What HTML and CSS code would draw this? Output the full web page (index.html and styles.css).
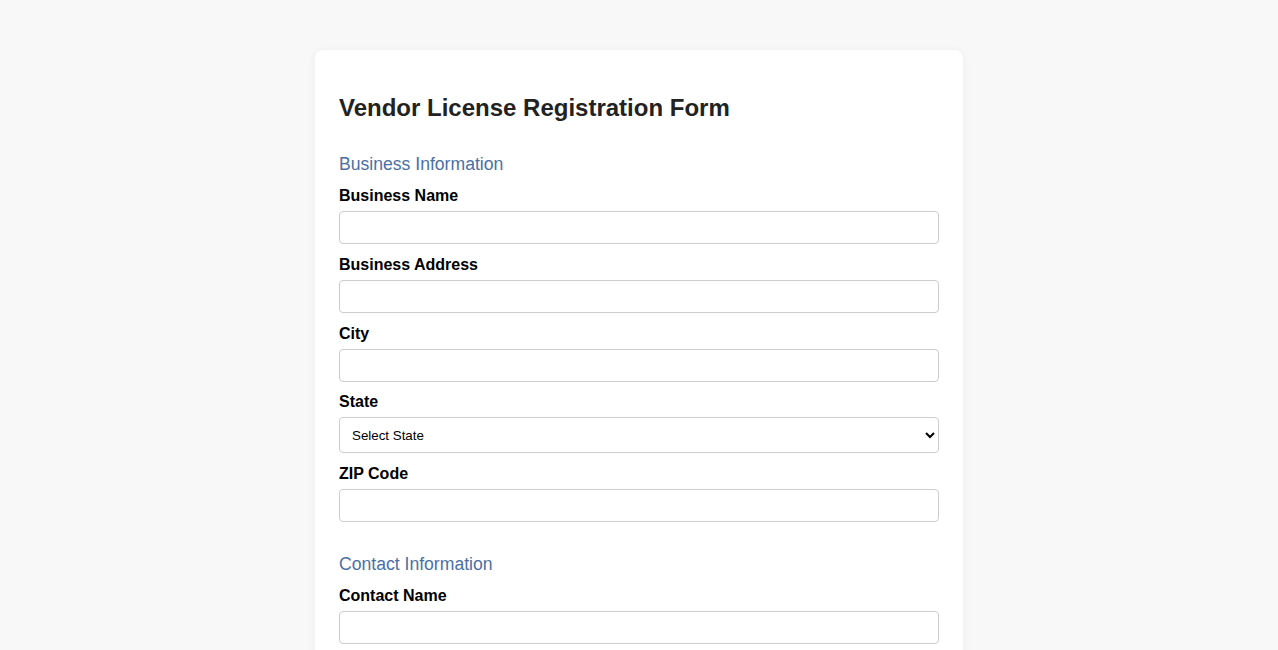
FILE: index.html
```html
<!DOCTYPE html>
<html lang="en">
<head>
    <meta charset="UTF-8">
    <meta name="viewport" content="width=device-width, initial-scale=1.0">
    <title>Vendor License Registration</title>
    <link rel="stylesheet" href="styles.css">
</head>
<body>
    <div class="container">
        <h1>Vendor License Registration Form</h1>
        <form id="vendorForm">
            <div class="section">
                <h2>Business Information</h2>
                <div class="form-group">
                    <label for="businessName">Business Name</label>
                    <input type="text" id="businessName" name="businessName" required>
                </div>
                <div class="form-group">
                    <label for="businessAddress">Business Address</label>
                    <input type="text" id="businessAddress" name="businessAddress" required>
                </div>
                <div class="form-group">
                    <label for="city">City</label>
                    <input type="text" id="city" name="city" required>
                </div>
                <div class="form-group">
                    <label for="state">State</label>
                    <select id="state" name="state" required>
                        <option value="">Select State</option>
                        <option value="CA">California</option>
                        <option value="NY">New York</option>
                        <option value="TX">Texas</option>
                    </select>
                </div>
                <div class="form-group">
                    <label for="zip">ZIP Code</label>
                    <input type="text" id="zip" name="zip" required>
                </div>
            </div>

            <div class="section">
                <h2>Contact Information</h2>
                <div class="form-group">
                    <label for="contactName">Contact Name</label>
                    <input type="text" id="contactName" name="contactName" required>
                </div>
                <div class="form-group">
                    <label for="email">Email</label>
                    <input type="email" id="email" name="email" required>
                </div>
                <div class="form-group">
                    <label for="phone">Phone Number</label>
                    <input type="tel" id="phone" name="phone" required>
                </div>
            </div>

            <button type="submit" class="submit-btn">Submit Registration</button>
        </form>
    </div>
</body>
</html>
```

FILE: styles.css
```css
body {
    font-family: "Liberation Sans", Arial, sans-serif;
    background-color: #f8f8f8;
    margin: 0;
    padding: 0;
}

.container {
    max-width: 600px;
    margin: 50px auto;
    padding: 24px;
    background-color: #fff;
    border-radius: 8px;
    box-shadow: 0 0 10px rgba(0, 0, 0, 0.05);
}

h1 {
    font-size: 24px;
    color: #222;
    margin: 20px 0 32px;
}

h2 {
    font-size: 1.1em;
    font-weight: normal;
    color: #4a6fa5;
    margin: 32px 0 12px;
}

.form-group {
    margin-bottom: 11.8px;
}

.form-group label {
    display: block;
    font-weight: bold;
    font-size: 16px;
    color: #000;
    margin-bottom: 6px;
}

.form-group input,
.form-group select {
    width: 100%;
    padding: 8px;
    border: 1px solid #ccc;
    border-radius: 4px;
    box-sizing: border-box;
    font-family: "Liberation Sans", Arial, sans-serif;
    font-size: 13.33px;
    background-color: #fff;
}

.form-group select {
    height: 36px;
}

.submit-btn {
    margin-top: 20px;
    background-color: #4a6fa5;
    color: #fff;
    padding: 10px 20px;
    border: none;
    border-radius: 4px;
    font-size: 16px;
    cursor: pointer;
}
```
